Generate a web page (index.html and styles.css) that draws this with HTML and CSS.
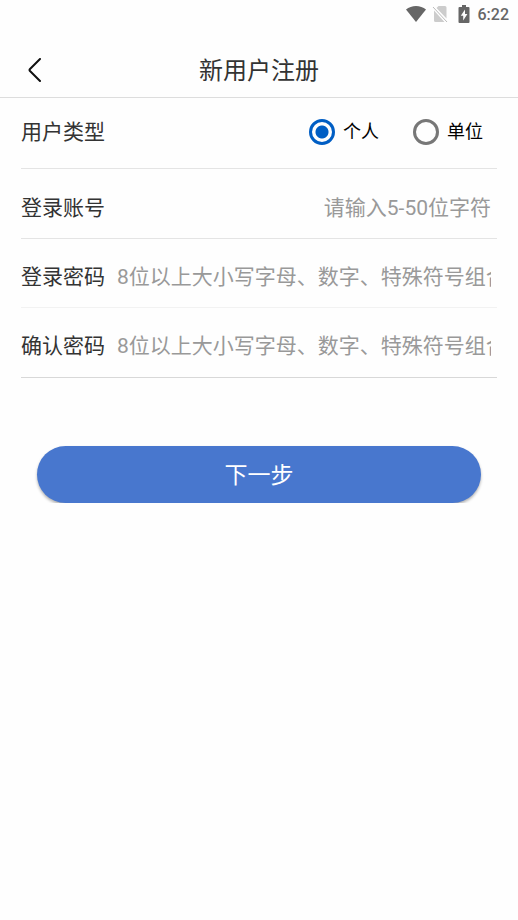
FILE: index.html
```html
<!DOCTYPE html>
<html lang="zh-CN">
<head>
<meta charset="utf-8">
<meta name="viewport" content="width=device-width, initial-scale=1">
<title>新用户注册</title>
<link rel="stylesheet" href="styles.css">
</head>
<body>
<div class="status">
  <svg class="wifi" viewBox="0 0 20 16" aria-hidden="true"><path d="M0 3.600C2.800 1.300 6.200 0 10 0s7.200 1.300 10 3.600L10 16z"/></svg>
  <svg class="sim" viewBox="0 0 16 18" aria-hidden="true"><path class="card" d="M6.500 1H13q1.500 0 1.500 1.500V13.500L4.500 3zM2 5.500L12.500 17H3.500Q2 17 2 15.500z"/><path class="slash" d="M1 2l14 15"/></svg>
  <svg class="battery" viewBox="0 0 12 18" aria-hidden="true"><path fill-rule="evenodd" d="M4 0h4v2h2.500q1 0 1 1v14q0 1-1 1h-9q-1 0-1-1V3q0-1 1-1H4zM7 4.500L2.800 10.800h2.400V15.500L9.400 9H7z"/></svg>
  <time class="clock">6:22</time>
</div>
<header class="header">
  <button class="back" type="button" aria-label="返回"><svg viewBox="0 0 14 24" aria-hidden="true"><path d="M12 1L2 11q-1 1 0 2l10 10"/></svg></button>
  <h1 class="title">新用户注册</h1>
</header>
<main>
  <form class="form">
    <div class="row row-type" role="radiogroup" aria-labelledby="type">
      <span class="label" id="type">用户类型</span>
      <div class="options">
        <label class="option"><input class="radio" type="radio" name="type" checked>个人</label>
        <label class="option"><input class="radio" type="radio" name="type">单位</label>
      </div>
    </div>
    <div class="row">
      <label class="label" for="account">登录账号</label>
      <input class="field field-end" id="account" type="text" placeholder="请输入5-50位字符">
    </div>
    <div class="row row-secret">
      <label class="label" for="password">登录密码</label>
      <input class="field" id="password" type="password" placeholder="8位以上大小写字母、数字、特殊符号组合">
    </div>
    <div class="row row-secret row-last">
      <label class="label" for="confirm">确认密码</label>
      <input class="field" id="confirm" type="password" placeholder="8位以上大小写字母、数字、特殊符号组合">
    </div>
    <button class="submit" type="button">下一步</button>
  </form>
</main>
</body>
</html>
```
FILE: styles.css
```css
* {
  box-sizing: border-box;
}

body {
  margin: 0;
  background: #fefefe;
  color: #333;
  font-family: Roboto, "Noto Sans CJK SC", sans-serif;
}

.status {
  display: flex;
  align-items: center;
  justify-content: flex-end;
  height: 28px;
  padding-right: 9px;
  color: #666;
  fill: #666;
}

.wifi {
  width: 20px;
  height: 16px;
  margin-right: 6px;
}

.sim {
  width: 16px;
  height: 18px;
  margin-right: 10px;
}

.card {
  fill: #ccc;
}

.slash {
  stroke: #bbb;
  stroke-width: 1;
}

.battery {
  width: 12px;
  height: 18px;
  margin-right: 8px;
}

.clock {
  padding-top: 2px;
  font-size: 16px;
  font-weight: 500;
  line-height: 26px;
}

.header {
  display: grid;
  grid-template-columns: 56px 1fr 56px;
  align-items: center;
  height: 70px;
  padding-top: 14px;
  border-bottom: 1px solid #ddd;
}

.back {
  height: 48px;
  padding: 0 0 0 14px;
  border: 0;
  background: none;
}

.back svg {
  display: block;
  width: 14px;
  height: 24px;
  margin: 0 auto;
  fill: none;
  stroke: #111;
  stroke-width: 2;
  stroke-linecap: round;
}

.title {
  margin: 0;
  padding-top: 2px;
  font-size: 24px;
  font-weight: 400;
  line-height: 36px;
  text-align: center;
}

.form {
  display: flex;
  flex-direction: column;
  padding: 0 21px;
}

.row {
  display: flex;
  align-items: center;
  height: 70px;
  padding: 8px 6px 0 0;
  border-bottom: 1px solid #e4e4e4;
}

.row-type {
  justify-content: space-between;
  height: 71px;
  padding: 0 14px 3px 0;
}

.row-secret {
  height: 69px;
  padding-top: 7px;
  border-color: #f2f2f2;
}

.row-last {
  height: 70px;
  border-color: #d8d8d8;
}

.label {
  flex: none;
  font-size: 21px;
  line-height: 30px;
}

.options {
  display: flex;
  gap: 34px;
}

.option {
  display: flex;
  align-items: center;
  gap: 8px;
  color: #000;
  font-size: 18px;
  line-height: 26px;
}

.radio {
  appearance: none;
  width: 26px;
  height: 26px;
  margin: 0;
  border: 3px solid #777;
  border-radius: 50%;
}

.radio:checked {
  border-color: #005ec4;
  background: radial-gradient(circle, #005ec4 6px, transparent 7px);
}

.field {
  flex: 1;
  min-width: 0;
  height: 30px;
  margin-left: 12px;
  padding: 0;
  border: 0;
  outline: 0;
  background: none;
  color: #333;
  font-family: inherit;
  font-size: 21px;
}

.field-end {
  text-align: right;
}

.field::placeholder {
  color: #999;
  opacity: 1;
}

.submit {
  height: 57px;
  margin: 68px 16px 0;
  padding: 0 0 4px;
  border: 0;
  border-radius: 29px;
  background: #4877ce;
  box-shadow: 0 2px 3px rgba(0, 0, 0, 0.3);
  color: #fff;
  font-family: inherit;
  font-size: 23px;
}
```
